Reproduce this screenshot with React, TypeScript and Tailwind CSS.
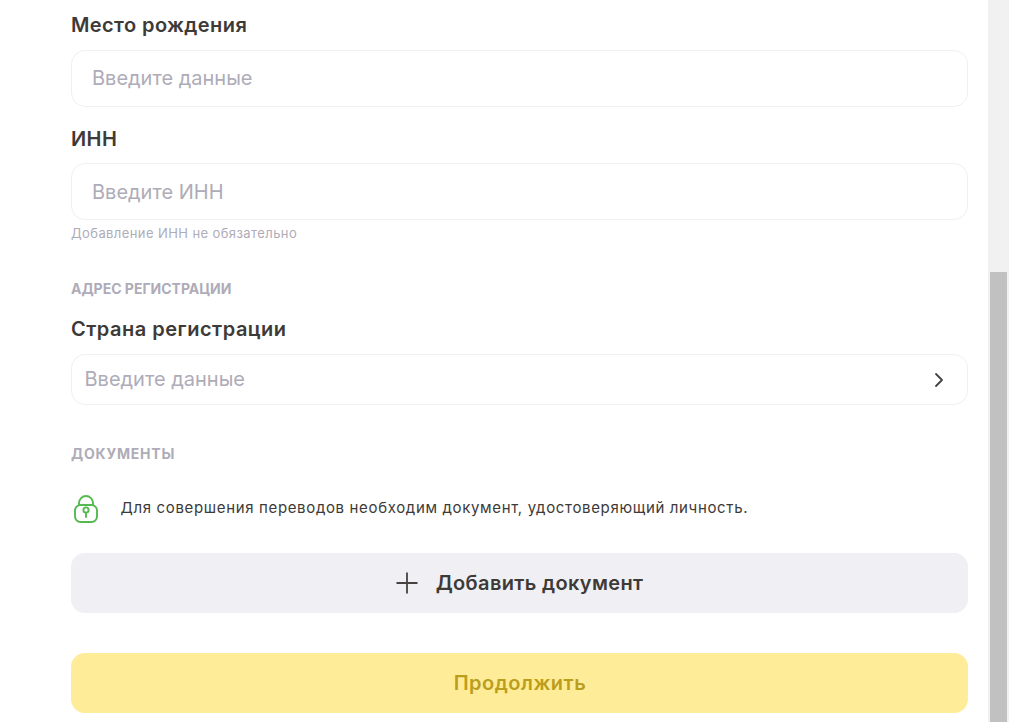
import React from "react";

function Label({ children, className = "" }: { children: React.ReactNode; className?: string }) {
  return <div className={`text-[20px] leading-[24px] font-semibold tracking-[0.4px] text-[#3d3a37] ${className}`}>{children}</div>;
}

function Field({ placeholder, className = "" }: { placeholder: string; className?: string }) {
  return (
    <div className={`h-[57px] rounded-[14px] border border-[#f0f0f3] bg-white pl-[20px] flex items-center text-[20px] text-[#aeacb8] ${className}`}>
      {placeholder}
    </div>
  );
}

export default function App() {
  return (
    <div className="flex h-[722px] w-[1025px] overflow-hidden bg-white font-['Inter',sans-serif]">
      <main className="w-[988px] shrink-0 pl-[71px] pr-[20px] pt-[13px]">
        <Label>Место рождения</Label>
        <Field placeholder="Введите данные" className="mt-[13px] pb-[2px]" />
        <Label className="mt-[20px]">ИНН</Label>
        <Field placeholder="Введите ИНН" className="mt-[12px]" />
        <div className="mt-[5px] text-[13px] leading-[16px] tracking-[0.41px] text-[#aeacb8]">Добавление ИНН не обязательно</div>
        <div className="mt-[40px] text-[14px] leading-[16px] font-bold text-[#aeacb8]">АДРЕС РЕГИСТРАЦИИ</div>
        <Label className="mt-[20px] tracking-[0.5px]">Страна регистрации</Label>
        <div className="mt-[13px] h-[51px] rounded-[14px] border border-[#f0f0f3] bg-white pl-[12.5px] pr-[21px] flex items-center justify-between text-[20px] text-[#aeacb8]">
          <span className="pb-[2px]">Введите данные</span>
          <svg width="14" height="16" viewBox="0 0 14 16" fill="none" stroke="#45423f" strokeWidth="1.8" strokeLinecap="round" strokeLinejoin="round">
            <path d="M4 2l6 6-6 6" />
          </svg>
        </div>
        <div className="mt-[41px] text-[14px] leading-[16px] font-bold tracking-[0.8px] text-[#aeacb8]">ДОКУМЕНТЫ</div>
        <div className="mt-[30px] flex h-[32px] items-center">
          <svg width="30" height="32" viewBox="0 0 30 32" fill="none" stroke="#55b851" strokeWidth="1.9" strokeLinecap="round" strokeLinejoin="round" className="shrink-0">
            <path d="M8 13V11a7 7 0 0 1 14 0V13" />
            <rect x="4" y="13" width="22" height="17" rx="5.5" />
            <circle cx="15" cy="18" r="2.6" />
            <path d="M15 20.6V25" />
          </svg>
          <span className="ml-[19.5px] text-[15px] tracking-[0.65px] text-[#3d3a37]">Для совершения переводов необходим документ, удостоверяющий личность.</span>
        </div>
        <button className="mt-[29px] flex h-[60px] w-full items-center justify-center rounded-[14px] bg-[#efeff4] text-[20px] font-semibold tracking-[0.35px] text-[#3d3a37]">
          <svg width="24" height="24" viewBox="0 0 24 24" fill="none" stroke="#45423f" strokeWidth="1.8" className="mr-[16px]">
            <path d="M11 1.5v21M.5 12h21" />
          </svg>
          Добавить документ
        </button>
        <button className="mt-[40px] flex h-[60px] w-full items-center justify-center rounded-[14px] bg-[#ffec99] pl-[1px] text-[20px] font-semibold tracking-[0.5px] text-[#bb9e1c]">
          Продолжить
        </button>
      </main>
      <aside className="flex h-full w-[21px] shrink-0 flex-col bg-[#f1f1f1] px-[2px] pt-[272px]">
        <div className="flex-1 bg-[#c1c1c1]" />
      </aside>
    </div>
  );
}
